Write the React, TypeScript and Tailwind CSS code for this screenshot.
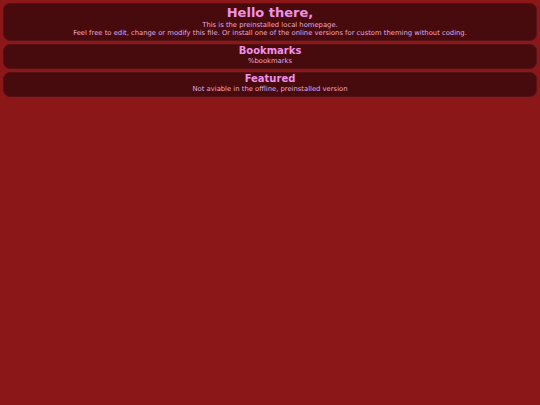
const sections = [
  {
    title: "Hello there,",
    lines: [
      "This is the preinstalled local homepage.",
      "Feel free to edit, change or modify this file. Or install one of the online versions for custom theming without coding.",
    ],
    big: true,
  },
  { title: "Bookmarks", lines: ["%bookmarks"] },
  { title: "Featured", lines: ["Not aviable in the offline, preinstalled version"] },
]

export default function App() {
  return (
    <div className="min-h-[405px] w-full bg-[#8b1719] p-[3px] flex flex-col gap-[3px] font-['DejaVu_Sans',sans-serif]">
      {sections.map((s) => (
        <div
          key={s.title}
          className={`rounded-[7px] bg-[#470b0e] border border-[#561114] text-center flex flex-col items-center ${s.big ? "pt-[2px] pb-[3px]" : "pt-[1px] pb-[3px]"}`}
        >
          <h2
            className={`font-bold text-[#f090e6] leading-none ${s.big ? "text-[13px] mb-[2px]" : "text-[10px] mb-[1px]"}`}
          >
            {s.title}
          </h2>
          {s.lines.map((l) => (
            <p key={l} className="text-[6.8px] leading-[8px] text-[#e8a8dc]">
              {l}
            </p>
          ))}
        </div>
      ))}
    </div>
  )
}
